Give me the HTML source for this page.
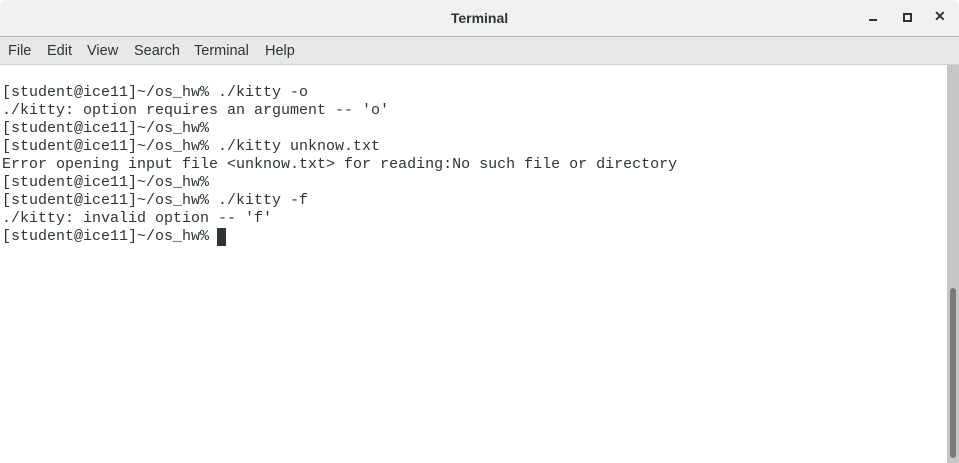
<!DOCTYPE html>
<html><head><style>
body{margin:0;width:959px;height:463px;overflow:hidden;background:#fff;font-family:"Liberation Sans",sans-serif;position:relative}
#title{position:absolute;left:0;top:0;width:959px;height:36px;background:#f1f1f1;border-bottom:1px solid #b8b8b8;border-radius:6px 6px 0 0}
#title .t{position:absolute;left:0;right:0;top:10px;text-align:center;font-size:14px;font-weight:bold;color:#2e3436}
#menu{position:absolute;left:0;top:37px;width:959px;height:27px;background:#e8e8e8;border-bottom:1px solid #d0d0d0}
#menu span{position:absolute;top:6px;font-size:14.5px;color:#2e3436}
#term{position:absolute;left:2px;top:84px;font-family:"Liberation Mono",monospace;font-size:15px;line-height:18px;color:#2e3436;white-space:pre}
#sb{position:absolute;left:947px;top:65px;width:12px;height:398px;background:#c6c6c6}
#thumb{position:absolute;left:950px;top:288px;width:6px;height:170px;background:#7a7a7a;border-radius:3px}
#cur{position:absolute;left:217px;top:228px;width:9px;height:18px;background:#2e3436}
</style></head><body>
<div id="title"><div class="t">Terminal</div>
<div style="position:absolute;left:869px;top:19px;width:8px;height:2px;background:#2e3436"></div>
<div style="position:absolute;left:903px;top:13px;width:5px;height:5px;border:2px solid #2e3436"></div>
<div style="position:absolute;left:934px;top:8px;font-size:14px;font-weight:bold;color:#2e3436">✕</div>
</div>
<div id="menu"><span style="left:8px">File</span><span style="left:47px">Edit</span><span style="left:87px">View</span><span style="left:134px">Search</span><span style="left:194px">Terminal</span><span style="left:265px">Help</span></div>
<div id="term">[student@ice11]~/os_hw% ./kitty -o
./kitty: option requires an argument -- 'o'
[student@ice11]~/os_hw%
[student@ice11]~/os_hw% ./kitty unknow.txt
Error opening input file &lt;unknow.txt&gt; for reading:No such file or directory
[student@ice11]~/os_hw%
[student@ice11]~/os_hw% ./kitty -f
./kitty: invalid option -- 'f'
[student@ice11]~/os_hw% </div>
<div id="cur"></div>
<div id="sb"></div><div id="thumb"></div>
</body></html>
